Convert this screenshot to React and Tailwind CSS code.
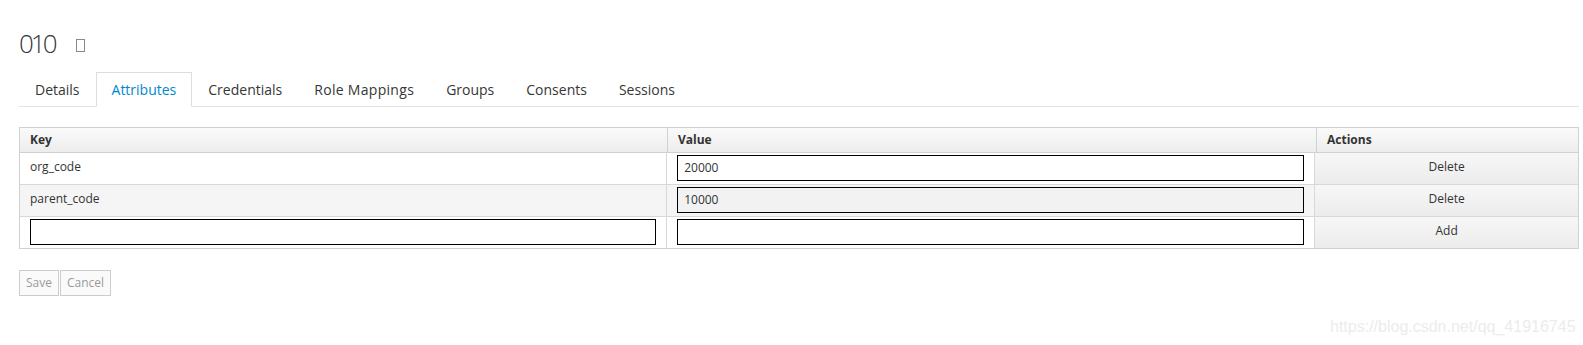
import React from "react";

const font = { fontFamily: '"Open Sans", "Segoe UI", Arial, sans-serif' };

function Tab({ label, active, wide }) {
  if (active) {
    return (
      <div className="h-[35px] px-[15px] border border-[#dddddd] border-b-white bg-white -mb-px flex items-center text-[14px] text-[#0088ce]">
        {label}
      </div>
    );
  }
  return (
    <div
      className={`h-[34px] px-[16px] flex items-center text-[14px] text-[#363636] ${wide ? "tracking-[0.3px]" : ""}`}
    >
      {label}
    </div>
  );
}

function TextInput({ value, bg }) {
  return (
    <div
      className={`h-[26px] border border-black ${bg ? "bg-[#f2f2f2]" : "bg-white"} px-[6px] flex items-center text-[12px] text-[#333]`}
    >
      {value}
    </div>
  );
}

function ActionCell({ label }) {
  return (
    <div className="w-[263px] bg-gradient-to-b from-[#f7f7f7] to-[#ececec] flex justify-center pt-[5px] text-[12px] text-[#333]">
      {label}
    </div>
  );
}

export default function App() {
  return (
    <div className="relative w-[1583px] h-[345px] bg-white overflow-hidden" style={font}>
      <div className="pl-[19px] pt-[27px] w-[1579px]">
        <div className="flex items-center h-[32px]">
          <span className="text-[26px] font-light text-[#363636] tracking-[-3px] leading-none">010</span>
          <span className="ml-[21px] mt-[4px] inline-block w-[9px] h-[13px] border border-[#8a8a8a]" />
        </div>
        <div className="mt-[13px] flex border-b border-[#e3e3e3]">
          <Tab label="Details" />
          <Tab label="Attributes" active />
          <Tab label="Credentials" />
          <Tab label="Role Mappings" wide />
          <Tab label="Groups" />
          <Tab label="Consents" />
          <Tab label="Sessions" />
        </div>

        <div className="mt-[20px] border border-[#d1d1d1] text-[12px] text-[#333]">
          <div className="flex h-[25px] bg-gradient-to-b from-[#fafafa] to-[#ededed] border-b border-[#d1d1d1] font-bold">
            <div className="w-[648px] border-r border-[#d1d1d1] px-[10px] flex items-center">Key</div>
            <div className="w-[649px] border-r border-[#d1d1d1] px-[10px] flex items-center">Value</div>
            <div className="flex-1 px-[10px] flex items-center">Actions</div>
          </div>

          <div className="flex h-[32px] bg-white border-b border-[#d8d8d8]">
            <div className="w-[648px] border-r border-[#d8d8d8] px-[10px] pt-[5px]">org_code</div>
            <div className="w-[649px] border-r border-[#d8d8d8] px-[10px] pt-[2px]">
              <TextInput value="20000" />
            </div>
            <ActionCell label="Delete" />
          </div>

          <div className="flex h-[32px] bg-[#f5f5f5] border-b border-[#d8d8d8]">
            <div className="w-[648px] border-r border-[#d8d8d8] px-[10px] pt-[5px]">parent_code</div>
            <div className="w-[649px] border-r border-[#d8d8d8] px-[10px] pt-[2px]">
              <TextInput value="10000" bg />
            </div>
            <ActionCell label="Delete" />
          </div>

          <div className="flex h-[31px] bg-white">
            <div className="w-[648px] border-r border-[#d8d8d8] px-[10px] pt-[2px]">
              <TextInput value="" />
            </div>
            <div className="w-[649px] border-r border-[#d8d8d8] px-[10px] pt-[2px]">
              <TextInput value="" />
            </div>
            <ActionCell label="Add" />
          </div>
        </div>

        <div className="mt-[21px] flex gap-[1px]">
          <div className="h-[26px] px-[6px] border border-[#cccccc] bg-[#fafafa] flex items-center text-[12px] text-[#9a9a9a]">Save</div>
          <div className="h-[26px] px-[6px] border border-[#cccccc] bg-[#fafafa] flex items-center text-[12px] text-[#9a9a9a]">Cancel</div>
        </div>
      </div>

      <div
        className="absolute left-[1330px] top-[315px] text-[16px] text-[#ececec]"
        style={{ fontFamily: '"Liberation Sans", Arial, sans-serif' }}
      >
        https://blog.csdn.net/qq_41916745
      </div>
    </div>
  );
}
